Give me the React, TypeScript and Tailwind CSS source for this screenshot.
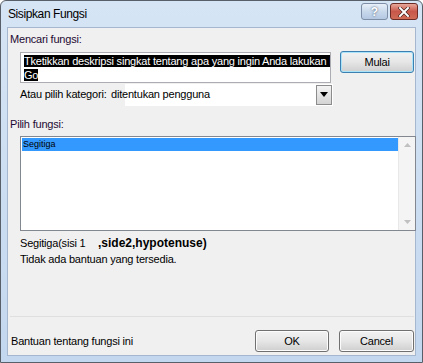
import React from 'react';

const font = { fontFamily: '"Liberation Sans", Arial, sans-serif' };

const WinButton: React.FC<{ label: string; focused?: boolean; className?: string }> = ({ label, focused, className }) => (
  <div
    className={`flex items-center justify-center rounded-[3px] border text-[11px] tracking-[-0.2px] text-black bg-gradient-to-b from-[#f2f2f2] via-[#e6e6e6] to-[#cfcfcf] ${
      focused ? 'border-[#3c7fb1] shadow-[inset_0_0_0_1px_#a8e3fa]' : 'border-[#707070] shadow-[inset_0_0_0_1px_#fcfcfc]'
    } ${className ?? ''}`}
  >
    {label}
  </div>
);

const App: React.FC = () => {
  return (
    <div className="w-[423px] h-[363px] bg-white" style={font}>
      <div className="flex flex-col w-[423px] h-[363px] border border-[#585f68] rounded-t-[6px] bg-gradient-to-b from-[#d6e5f5] to-[#c3d7ee]">
        {/* title bar */}
        <div className="flex items-center h-[26px] shrink-0 pl-[7px] pr-[4px]">
          <span className="text-[12px] tracking-[-0.4px] text-black">Sisipkan Fungsi</span>
          <div className="ml-auto flex gap-[2px] self-start mt-[2px]">
            <div className="flex items-center justify-center w-[27px] h-[17px] rounded-[3px] border border-[#7d8ea6] bg-gradient-to-b from-[#e8f0f9] via-[#c9d9ec] to-[#b4c8e2] text-white text-[12px] font-bold [text-shadow:0_0_2px_#34475f]">
              ?
            </div>
            <div className="flex items-center justify-center w-[28px] h-[17px] rounded-[3px] border border-[#6b2a24] bg-gradient-to-b from-[#e8a79b] via-[#c8574a] to-[#cf6b55]">
              <svg width="12" height="10" viewBox="0 0 12 10">
                <path d="M2 1 L10 9 M10 1 L2 9" stroke="#3a1a16" strokeWidth="3.2" strokeLinecap="square" />
                <path d="M2 1 L10 9 M10 1 L2 9" stroke="#ffffff" strokeWidth="2" strokeLinecap="square" />
              </svg>
            </div>
          </div>
        </div>

        {/* client area */}
        <div className="flex flex-col shrink-0 mx-[6px] h-[329px] border border-[#a4b7cf] bg-[#f0f0f0] pl-[2px] pr-[1px] text-[11px] tracking-[-0.2px] text-black">
          <div className="text-[#1e0a32] mt-[4px] leading-[14px]">Mencari fungsi:</div>

          <div className="flex items-start mt-[6px] pl-[10px]">
            <div className="w-[312px] h-[31px] overflow-hidden border border-[#abadb3] bg-white pl-[3px] pt-[1px] leading-[14px]">
              <span className="bg-black text-white whitespace-nowrap">Tketikkan deskripsi singkat tentang apa yang ingin Anda lakukan I</span>
              <br />
              <span className="bg-black text-white">Go</span>
            </div>
            <WinButton label="Mulai" focused className="ml-[9px] w-[74px] h-[22px] -mt-[1px]" />
          </div>

          <div className="flex items-center pl-[10px] h-[23px]">
            <span className="w-[90px] shrink-0 whitespace-nowrap">Atau pilih kategori:</span>
            <div className="flex items-center ml-[15px] w-[208px] h-[22px] bg-white">
              <span className="-ml-[14px] whitespace-nowrap">ditentukan pengguna</span>
              <div className="ml-auto flex items-center justify-center w-[16px] h-[20px] mr-[1px] border border-[#8c8c8c] bg-gradient-to-b from-[#f4f4f4] to-[#d4d4d4]">
                <svg width="8" height="5" viewBox="0 0 8 5">
                  <path d="M0 0 H8 L4 5 Z" fill="#000" />
                </svg>
              </div>
            </div>
          </div>

          <div className="text-[#1e0a32] mt-[11px] leading-[14px]">Pilih fungsi:</div>

          <div className="flex ml-[10px] mt-[5px] w-[396px] h-[95px] border border-[#828790] bg-white">
            <div className="flex-1 pt-[1px] pl-[1px]">
              <div className="h-[13px] bg-[#3399ff] text-[9px] tracking-normal leading-[13px] pl-[1px] text-black">Segitiga</div>
            </div>
            <div className="flex flex-col items-center justify-between w-[17px] py-[6px] bg-[#f4f4f4] border-l border-[#e8e8e8]">
              <svg width="7" height="4" viewBox="0 0 7 4">
                <path d="M0 4 L3.5 0 L7 4 Z" fill="#c0c0c0" />
              </svg>
              <svg width="7" height="4" viewBox="0 0 7 4">
                <path d="M0 0 L3.5 4 L7 0 Z" fill="#c0c0c0" />
              </svg>
            </div>
          </div>

          <div className="flex items-baseline pl-[10px] mt-[5px] leading-[15px]">
            <span className="w-[78px]">Segitiga(sisi 1</span>
            <span className="font-bold text-[12px] tracking-normal">,side2,hypotenuse)</span>
          </div>
          <div className="pl-[10px] mt-[1px] leading-[15px]">Tidak ada bantuan yang tersedia.</div>

          <div className="mt-auto border-t border-[#dfdfdf] mb-[13px]" />

          <div className="flex items-center h-[22px] mb-[3px]">
            <span className="pl-[1px]">Bantuan tentang fungsi ini</span>
            <WinButton label="OK" className="ml-auto w-[74px] h-[22px]" />
            <WinButton label="Cancel" className="ml-[10px] w-[75px] h-[22px]" />
          </div>
        </div>
        <div className="flex-1" />
      </div>
    </div>
  );
};

export default App;
